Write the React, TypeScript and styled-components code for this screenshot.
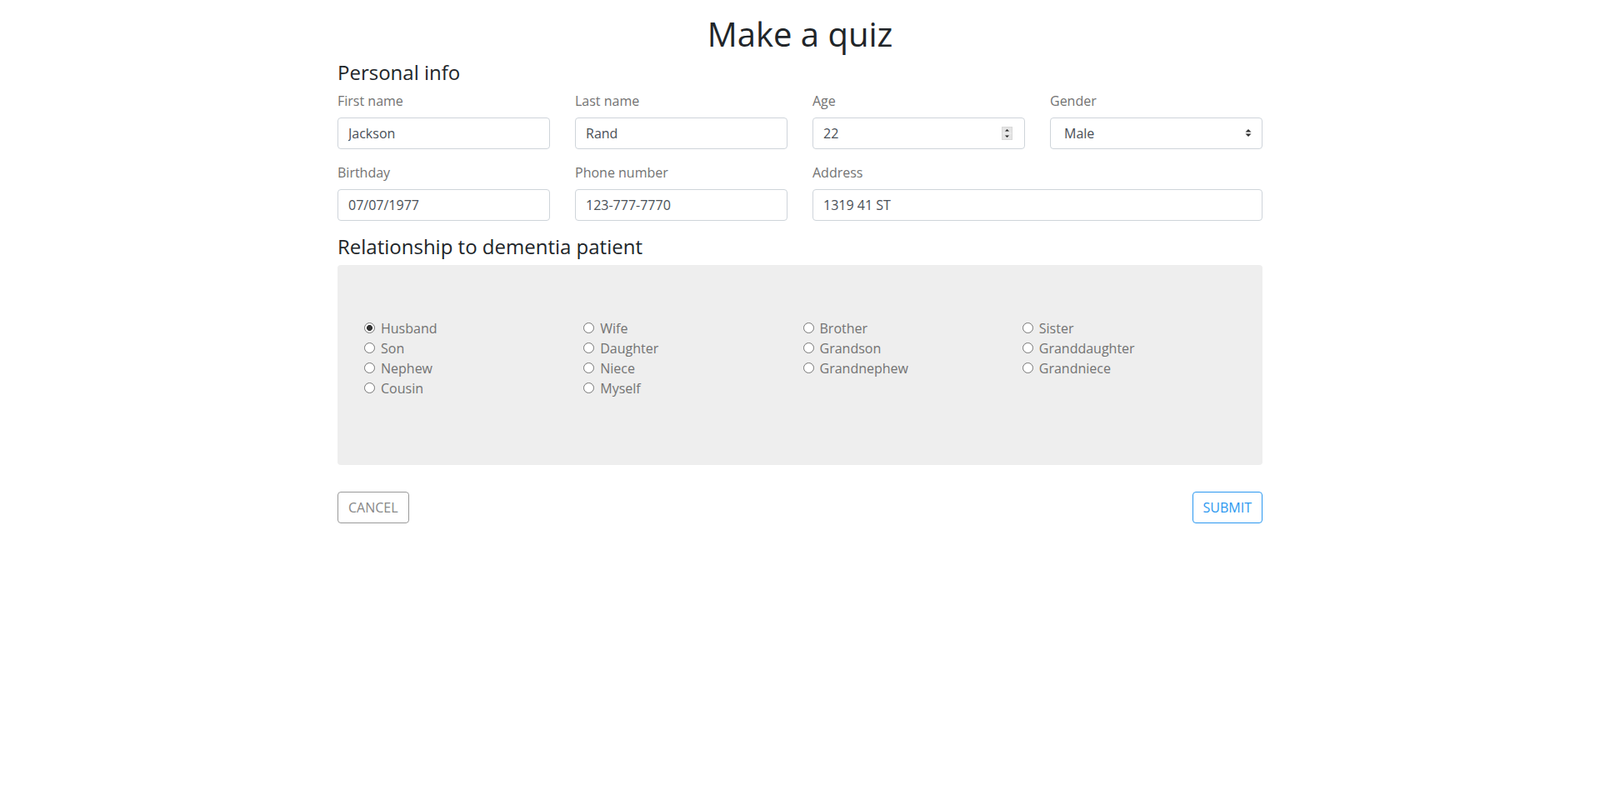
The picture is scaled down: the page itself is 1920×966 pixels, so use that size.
import React, { FC } from 'react';
import styled, { createGlobalStyle } from 'styled-components';

const GlobalStyle = createGlobalStyle`
  * { box-sizing: border-box; }
  body {
    margin: 0;
    background: #fff;
    font-family: "Open Sans", "Liberation Sans", sans-serif;
    font-size: 16px;
    line-height: 1.5;
    color: #212529;
  }
`;

const relations = [
  ['Husband', 'Son', 'Nephew', 'Cousin'],
  ['Wife', 'Daughter', 'Niece', 'Myself'],
  ['Brother', 'Grandson', 'Grandnephew'],
  ['Sister', 'Granddaughter', 'Grandniece'],
];

const App: FC = () => {
  return (
    <ContainerStyled>
      <GlobalStyle />
      <TitleStyled>Make a quiz</TitleStyled>

      <SectionTitleStyled>Personal info</SectionTitleStyled>
      <RowStyled>
        <FieldStyled>
          <LabelStyled>First name</LabelStyled>
          <InputStyled defaultValue="Jackson" />
        </FieldStyled>
        <FieldStyled>
          <LabelStyled>Last name</LabelStyled>
          <InputStyled defaultValue="Rand" />
        </FieldStyled>
        <FieldStyled>
          <LabelStyled>Age</LabelStyled>
          <ControlWrapStyled>
            <InputStyled defaultValue="22" />
            <SpinnerStyled>
              <svg width="11" height="14" viewBox="0 0 11 14">
                <rect x="0" y="0" width="11" height="6.5" fill="#e4e4e4" />
                <rect x="0" y="7.5" width="11" height="6.5" fill="#e4e4e4" />
                <path d="M3 4.5 L5.5 2 L8 4.5 Z" fill="#222" />
                <path d="M3 9.5 L5.5 12 L8 9.5 Z" fill="#222" />
              </svg>
            </SpinnerStyled>
          </ControlWrapStyled>
        </FieldStyled>
        <FieldStyled>
          <LabelStyled>Gender</LabelStyled>
          <ControlWrapStyled>
            <SelectStyled defaultValue="Male">
              <option>Male</option>
              <option>Female</option>
            </SelectStyled>
            <SelectArrowStyled>
              <svg width="8" height="11" viewBox="0 0 8 11">
                <path d="M0.5 4.5 L4 1 L7.5 4.5 Z" fill="#333" />
                <path d="M0.5 6.5 L4 10 L7.5 6.5 Z" fill="#333" />
              </svg>
            </SelectArrowStyled>
          </ControlWrapStyled>
        </FieldStyled>

        <FieldStyled>
          <LabelStyled>Birthday</LabelStyled>
          <InputStyled defaultValue="07/07/1977" />
        </FieldStyled>
        <FieldStyled>
          <LabelStyled>Phone number</LabelStyled>
          <InputStyled defaultValue="123-777-7770" />
        </FieldStyled>
        <FieldStyled span={2}>
          <LabelStyled>Address</LabelStyled>
          <InputStyled defaultValue="1319 41 ST" />
        </FieldStyled>
      </RowStyled>

      <SectionTitleStyled>Relationship to dementia patient</SectionTitleStyled>
      <RadioBoxStyled>
        {relations.map((col, i) => (
          <RadioColumnStyled key={i}>
            {col.map((name) => (
              <RadioLabelStyled key={name}>
                <RadioStyled
                  type="radio"
                  name="relation"
                  defaultChecked={name === 'Husband'}
                />
                {name}
              </RadioLabelStyled>
            ))}
          </RadioColumnStyled>
        ))}
      </RadioBoxStyled>

      <ActionsStyled>
        <ButtonStyled variant="secondary">Cancel</ButtonStyled>
        <ButtonStyled variant="primary">Submit</ButtonStyled>
      </ActionsStyled>
    </ContainerStyled>
  );
};

export default App;

const ContainerStyled = styled.div`
  width: 1140px;
  margin: 0 auto;
  padding: 17px 15px 0 15px;
`;

const TitleStyled = styled.h1`
  margin: 0 0 8px 0;
  font-size: 40px;
  font-weight: 400;
  line-height: 1.2;
  text-align: center;
  color: #212529;
`;

const SectionTitleStyled = styled.h4`
  margin: 0 0 7px 0;
  font-size: 24px;
  font-weight: 400;
  line-height: 1.2;
  color: #212529;
`;

const RowStyled = styled.div`
  display: grid;
  grid-template-columns: repeat(4, 1fr);
  column-gap: 30px;
  margin-bottom: 1px;
`;

const FieldStyled = styled.div<{ span?: number }>`
  grid-column: span ${(p) => p.span || 1};
  margin-bottom: 16px;
`;

const LabelStyled = styled.label`
  display: block;
  margin-bottom: 8px;
  color: #737373;
  font-size: 16px;
  line-height: 24px;
`;

const ControlWrapStyled = styled.div`
  position: relative;
`;

const InputStyled = styled.input`
  display: block;
  width: 100%;
  height: 38px;
  padding: 6px 12px;
  font-family: inherit;
  font-size: 16px;
  line-height: 1.5;
  color: #495057;
  background: #fff;
  border: 1px solid #ced4da;
  border-radius: 4px;
  outline: none;
`;

const SelectStyled = styled.select`
  display: block;
  width: 100%;
  height: 38px;
  padding: 6px 12px 6px 16px;
  font-family: inherit;
  font-size: 16px;
  line-height: 1.5;
  color: #495057;
  background: #fff;
  border: 1px solid #ced4da;
  border-radius: 4px;
  appearance: none;
  outline: none;
`;

const SpinnerStyled = styled.span`
  position: absolute;
  right: 15px;
  top: 11px;
  width: 13px;
  height: 16px;
  display: flex;
  align-items: center;
  justify-content: center;
  border: 1px solid #d8d8d8;
  background: #f0f0f0;
  pointer-events: none;
`;

const SelectArrowStyled = styled.span`
  position: absolute;
  right: 13px;
  top: 13px;
  display: flex;
  pointer-events: none;
`;

const RadioBoxStyled = styled.div`
  display: grid;
  grid-template-columns: repeat(4, 1fr);
  padding: 64px 30px 80px 27px;
  background: #eeeeee;
  border-radius: 4px;
`;

const RadioColumnStyled = styled.div`
  display: flex;
  flex-direction: column;
  padding-left: 5px;
  min-height: 96px;
`;

const RadioLabelStyled = styled.label`
  display: flex;
  align-items: center;
  height: 24px;
  color: #737373;
  font-size: 16px;
  line-height: 24px;
`;

const RadioStyled = styled.input`
  appearance: none;
  width: 13px;
  height: 13px;
  margin: 0 7px 0 0;
  border: 1px solid #767676;
  border-radius: 50%;
  background: #fff;
  &:checked {
    background: radial-gradient(circle, #333 0 3.2px, #fff 3.8px);
  }
`;

const ActionsStyled = styled.div`
  display: flex;
  justify-content: space-between;
  margin-top: 32px;
`;

const ButtonStyled = styled.button<{ variant: 'primary' | 'secondary' }>`
  height: 38px;
  padding: 6px 12px;
  font-family: inherit;
  font-size: 16px;
  line-height: 1.5;
  text-transform: uppercase;
  background: #fff;
  border-radius: 4px;
  cursor: pointer;
  color: ${(p) => (p.variant === 'primary' ? '#2b98f0' : '#888')};
  border: 1px solid ${(p) => (p.variant === 'primary' ? '#2b98f0' : '#999')};
`;
